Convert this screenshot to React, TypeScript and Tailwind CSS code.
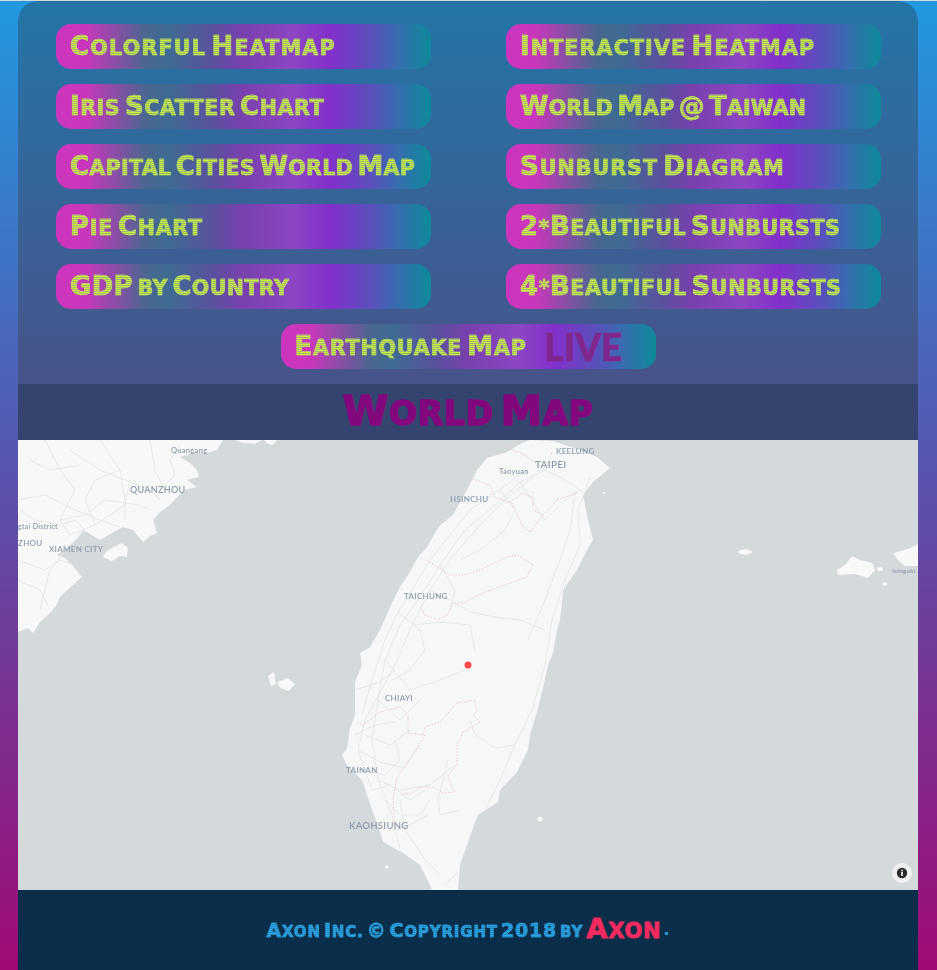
const charts = [
  { label: 'Colorful Heatmap', tracking: 'tracking-[1.3px]' },
  { label: 'Interactive Heatmap', tracking: 'tracking-[1.2px]' },
  { label: 'Iris Scatter Chart', tracking: 'tracking-[0.6px]' },
  { label: 'World Map @ Taiwan', tracking: 'tracking-[0.2px]' },
  { label: 'Capital Cities World Map', tracking: 'tracking-[0.35px]' },
  { label: 'Sunburst Diagram', tracking: 'tracking-[1.1px]' },
  { label: 'Pie Chart', tracking: 'tracking-[0.8px]' },
  { label: '2*Beautiful Sunbursts', tracking: 'tracking-[0.6px]' },
  { label: 'GDP by Country', tracking: 'tracking-[0.45px]' },
  { label: '4*Beautiful Sunbursts', tracking: 'tracking-[0.65px]' },
];

const labels = [
  { x: 171, y: 453, size: 7.5, text: 'Quangang' },
  { x: 130, y: 493, size: 9, text: 'QUANZHOU' },
  { x: 18, y: 529, size: 7, text: 'gtai District' },
  { x: 18, y: 546, size: 8, text: 'ZHOU' },
  { x: 49, y: 552, size: 8, text: 'XIAMEN CITY' },
  { x: 450, y: 502, size: 8, text: 'HSINCHU' },
  { x: 499, y: 474, size: 7.5, text: 'Taoyuan' },
  { x: 535, y: 468, size: 10, text: 'TAIPEI' },
  { x: 556, y: 454, size: 8, text: 'KEELUNG' },
  { x: 404, y: 599, size: 8, text: 'TAICHUNG' },
  { x: 385, y: 701, size: 8, text: 'CHIAYI' },
  { x: 346, y: 773, size: 8, text: 'TAINAN' },
  { x: 349, y: 829, size: 9.5, text: 'KAOHSIUNG' },
  { x: 892, y: 573, size: 6.5, text: 'Ishigaki' },
];

const roads = [
  'M545 470 L520 482 L495 505 L465 530 L440 565 L418 600 L400 625 L385 660 L378 700 L372 740 L378 780 L392 815 L400 850',
  'M535 475 L505 500 L480 525 L450 560 L430 590 L412 625 L395 665 L365 720 L358 750 L372 790',
  'M525 470 L500 490 L470 510 L450 535 L430 560 L412 590 L398 612 L385 640 L372 680 L362 715',
  'M590 478 L578 510 L580 545 L565 580 L552 620 L545 665 L532 710 L515 745 L500 780 L485 810',
  'M575 495 L570 530 L560 560 L545 600 L528 640',
  'M545 470 L565 480 L583 492',
  'M520 482 L535 505 L545 520 L565 500 L578 492',
  'M500 490 L515 510 L505 530 L480 550 L460 560',
  'M430 590 L450 600 L470 612 L500 618 L520 620 L545 630',
  'M412 625 L440 622 L470 625 L475 650',
  'M398 612 L420 630 L425 650 L410 670 L392 680',
  'M440 565 L455 590 L450 610',
  'M385 660 L410 690 L440 680 L470 668',
  'M378 700 L400 720 L420 700',
  'M365 735 L390 745 L410 730',
  'M358 750 L380 762 L405 768 L420 745',
  'M355 735 L375 725 L395 722',
  'M360 770 L385 775 L400 760 L395 740',
  'M372 790 L390 785 L410 800 L425 790',
  'M378 780 L400 790 L430 785 L455 765',
  'M385 800 L400 815 L420 815 L430 800',
  'M400 800 L405 830 L425 860 L440 875',
  'M392 830 L410 825 L428 815',
  'M355 690 L380 682 L395 670',
  'M470 720 L475 735 L495 748 L515 745',
  'M448 760 L438 800 L440 815 L460 810',
  'M445 885 L458 872',
  'M70 450 L100 470 L125 480 L150 490 L160 500',
  'M45 440 L60 470 L75 490 L60 520 L70 535 L95 525 L125 505 L130 480',
  'M18 500 L45 495 L75 510 L100 520 L120 527',
  'M18 560 L45 570 L60 560 L75 565',
  'M18 580 L40 590 L50 610',
  'M100 440 L120 470 L125 500 L125 520',
  'M150 440 L155 470 L165 490',
  'M30 460 L50 470 L80 465',
  'M80 535 L65 550 L50 570 L40 610',
  'M95 525 L85 500 L95 480 L120 470',
  'M60 520 L85 515 L105 500 L140 505 L150 510',
  'M20 510 L35 520 L60 525 L75 520 L85 530',
  'M180 445 L170 460 L175 475 L160 490',
];

const borders = [
  'M470 478 L490 485 L495 497 L510 503 L522 493 L533 497 L533 510 L543 515 L557 500 L578 492',
  'M512 503 L523 527 L530 532 L543 515',
  'M427 560 L450 575 L463 575 L480 570 L507 557 L518 555 L533 565 L527 577 L510 583 L483 593 L463 603 L453 603 L447 615 L437 620 L425 615 L420 607',
  'M357 723 L363 725 L380 712 L400 707 L408 715 L408 733 L423 735 L425 727 L440 722 L457 703 L475 700 L477 712 L473 715 L480 722 L463 732 L457 745 L457 765 L448 775 L452 788 L455 792 L443 793 L433 787 L420 787 L412 793 L400 795',
  'M425 735 L410 758 L397 778 L393 798 L395 830',
  'M500 445 L525 455 L545 470 L552 452',
];

// Monoton look: capitals and digits sit taller than the rest of the word
function Fancy({ text, big = 'text-[1.26em]' }: { text: string; big?: string }) {
  return (
    <>
      {text.split('').map((ch, i) =>
        /[A-Z0-9@©]/.test(ch) ? (
          <span key={i} className={big}>
            {ch}
          </span>
        ) : (
          <span key={i} className="uppercase">
            {ch}
          </span>
        ),
      )}
    </>
  );
}

function ChartButton({ label, tracking, live }: { label: string; tracking: string; live?: boolean }) {
  return (
    <a className="flex h-[45px] w-[375px] items-center rounded-[15px] bg-[linear-gradient(90deg,#cc35bd_0%,#c837bb_8%,#4a6790_24%,#3f6b92_30%,#5b509f_42%,#7a40ae_50%,#8c46c2_63%,#8230ca_73%,#5a50bc_84%,#3370ad_92%,#0d8a9a_100%)] pl-[14px]">
      <span className={`bg-[repeating-linear-gradient(0deg,#c8f628_0px,#c8f628_1px,rgba(175,200,130,0.8)_1px,rgba(175,200,130,0.8)_2px)] bg-clip-text font-['DejaVu_Sans'] text-[20.5px] leading-[30px] font-bold whitespace-nowrap text-transparent [-webkit-text-stroke:0.6px_rgba(190,225,90,0.75)] [word-spacing:-3px] ${tracking}`}>
        <Fancy text={label} />
      </span>
      {live && (
        <span className="ml-[18px] font-['Lato'] text-[37px] leading-[30px] font-black text-[#80278e] [-webkit-text-stroke:0.5px_#80278e]">LIVE</span>
      )}
    </a>
  );
}

function TaiwanMap() {
  return (
    <svg viewBox="18 440 900 450" className="block h-[450px] w-[900px] bg-[#d4d9dc]">
      <g className="blur-[0.6px]">
        {/* mainland coast */}
        <path
          fill="#f7f8f8"
          d="M18 440 L223 440 L217 450 L207 453 L195 452 L180 457 L190 463 L197 470 L199 477 L187 480 L197 487 L184 490 L170 505 L160 512 L153 520 L157 533 L150 536 L143 542 L137 535 L133 530 L123 527 L112 533 L100 540 L92 535 L83 530 L78 538 L73 543 L57 555 L65 558 L72 565 L82 577 L75 583 L60 597 L56 606 L50 613 L40 622 L33 633 L28 628 L18 632 Z"
        />
        <path fill="#f7f8f8" d="M103 557 L112 561 L120 556 L127 557 L128 548 L122 543 L113 547 L106 552 Z" />
        <path fill="#f7f8f8" d="M235 440 L262 440 L255 444 L243 443 Z" />
        <path fill="#f7f8f8" d="M264 440 L277 440 L273 445 L268 444 Z" />
        {/* taiwan */}
        <path
          fill="#f6f7f7"
          d="M522 443 L507 452 L487 458 L477 470 L473 478 L463 497 L453 515 L440 525 L435 533 L427 547 L418 557 L408 575 L400 587 L392 603 L380 630 L370 647 L360 653 L362 665 L355 682 L355 715 L350 728 L347 748 L342 755 L347 765 L362 780 L368 798 L380 832 L383 842 L403 853 L420 865 L430 885 L432 890 L458 890 L460 865 L473 828 L478 815 L498 802 L500 790 L517 772 L528 750 L530 735 L538 708 L543 688 L548 665 L553 653 L557 630 L560 620 L562 603 L563 590 L577 570 L587 550 L593 540 L588 520 L583 495 L593 482 L610 468 L597 457 L580 450 L553 441 L530 440 Z"
        />
        {/* small islands */}
        <ellipse cx="745" cy="552" rx="7" ry="2.5" fill="#f7f8f8" />
        <path fill="#f7f8f8" d="M852 556 L860 560 L872 563 L875 570 L868 578 L855 574 L838 575 L837 570 L845 565 Z" />
        <path fill="#f7f8f8" d="M893 553 L901 551 L910 548 L918 544 L918 566 L905 566 L898 560 Z" />
        <ellipse cx="880" cy="569" rx="3" ry="2" fill="#f7f8f8" />
        <ellipse cx="885" cy="584" rx="2.5" ry="2" fill="#f7f8f8" />
        <ellipse cx="540" cy="819" rx="2.5" ry="2.5" fill="#f7f8f8" />
        <ellipse cx="387" cy="867" rx="2" ry="1.5" fill="#f7f8f8" />
        <path fill="#f7f8f8" d="M268 676 L274 672 L276 684 L271 686 Z" />
        <path fill="#f7f8f8" d="M277 682 L288 678 L295 684 L289 691 L280 688 Z" />
        <ellipse cx="604" cy="493" rx="1.5" ry="1" fill="#f7f8f8" />

        {/* roads and county lines */}
        <g fill="none" stroke="#e4e6e7" strokeWidth="0.9">
          {roads.map((d) => (
            <path key={d} d={d} />
          ))}
        </g>
        <g fill="none" stroke="#e7c6c8" strokeWidth="0.9" strokeDasharray="1.5 1.5">
          {borders.map((d) => (
            <path key={d} d={d} />
          ))}
        </g>
      </g>
      <g fill="#8f9cac" className="font-['Lato'] font-semibold blur-[0.25px]">
        {labels.map((l) => (
          <text key={l.text} x={l.x} y={l.y} fontSize={l.size} letterSpacing="0.3">
            {l.text}
          </text>
        ))}
      </g>
      <circle cx="468" cy="665" r="3.5" fill="#ff4a4a" />
    </svg>
  );
}

export default function App() {
  return (
    <div className="h-[970px] overflow-hidden border-t border-[#d3d8dc] bg-[linear-gradient(180deg,#2199e0_0%,#5a52ac_50%,#a00a74_100%)] pr-[19px] pl-[18px]">
      <div className="overflow-hidden rounded-t-[20px]">
        <div className="h-[383px] bg-[linear-gradient(180deg,#2475a8_0%,#47538a_100%)] px-[38px] pt-[23px]">
          <div className="grid grid-cols-[375px_375px] gap-x-[75px] gap-y-[15px]">
            {charts.map((c) => (
              <ChartButton key={c.label} label={c.label} tracking={c.tracking} />
            ))}
          </div>
          <div className="mt-[15px] flex justify-center">
            <ChartButton label="Earthquake Map" tracking="tracking-[0.9px]" live />
          </div>
        </div>

        <div className="flex h-[56px] items-center justify-center bg-[#34446f]">
          <h1 className="bg-[repeating-linear-gradient(0deg,#86067f_0px,#86067f_2px,#7a0a7a_2px,#7a0a7a_3px)] bg-clip-text font-['DejaVu_Sans'] text-[33px] leading-[48px] font-bold tracking-[0.6px] text-transparent [-webkit-text-stroke:1.2px_#84067f] [word-spacing:-5px]">
            <Fancy text="World Map" />
          </h1>
        </div>

        <div className="relative">
          <TaiwanMap />
          <div className="absolute right-[6px] bottom-[7px] flex h-[20px] w-[20px] items-center justify-center rounded-full bg-[#eef0f1]">
            <svg viewBox="0 0 12 12" className="h-[12px] w-[12px]">
              <circle cx="6" cy="6" r="5.2" fill="#2b2b2b" />
              <rect x="5.2" y="5" width="1.6" height="4" fill="#fff" />
              <rect x="5.2" y="2.8" width="1.6" height="1.5" fill="#fff" />
            </svg>
          </div>
        </div>

        <footer className="flex h-[80px] items-center justify-center bg-[#0a2e4a] font-['DejaVu_Sans'] font-bold">
          <span className="bg-[repeating-linear-gradient(0deg,#2ca6e4_0px,#2ca6e4_1px,#2489c0_1px,#2489c0_2px)] bg-clip-text text-[15px] tracking-[0.85px] whitespace-nowrap text-transparent [-webkit-text-stroke:0.5px_#2aa0de] [word-spacing:-3px]">
            <Fancy text="Axon Inc. © Copyright 2018 by" />
          </span>
          <span className="ml-[3px] text-[21px] leading-[32px] tracking-[0.8px] text-[#f52a5e] [-webkit-text-stroke:0.8px_#f52a5e]">
            <Fancy text="Axon" big="text-[1.3em]" />
          </span>
          <span className="ml-[2px] text-[16px] text-[#2b9fdc]">.</span>
        </footer>
      </div>
    </div>
  );
}
